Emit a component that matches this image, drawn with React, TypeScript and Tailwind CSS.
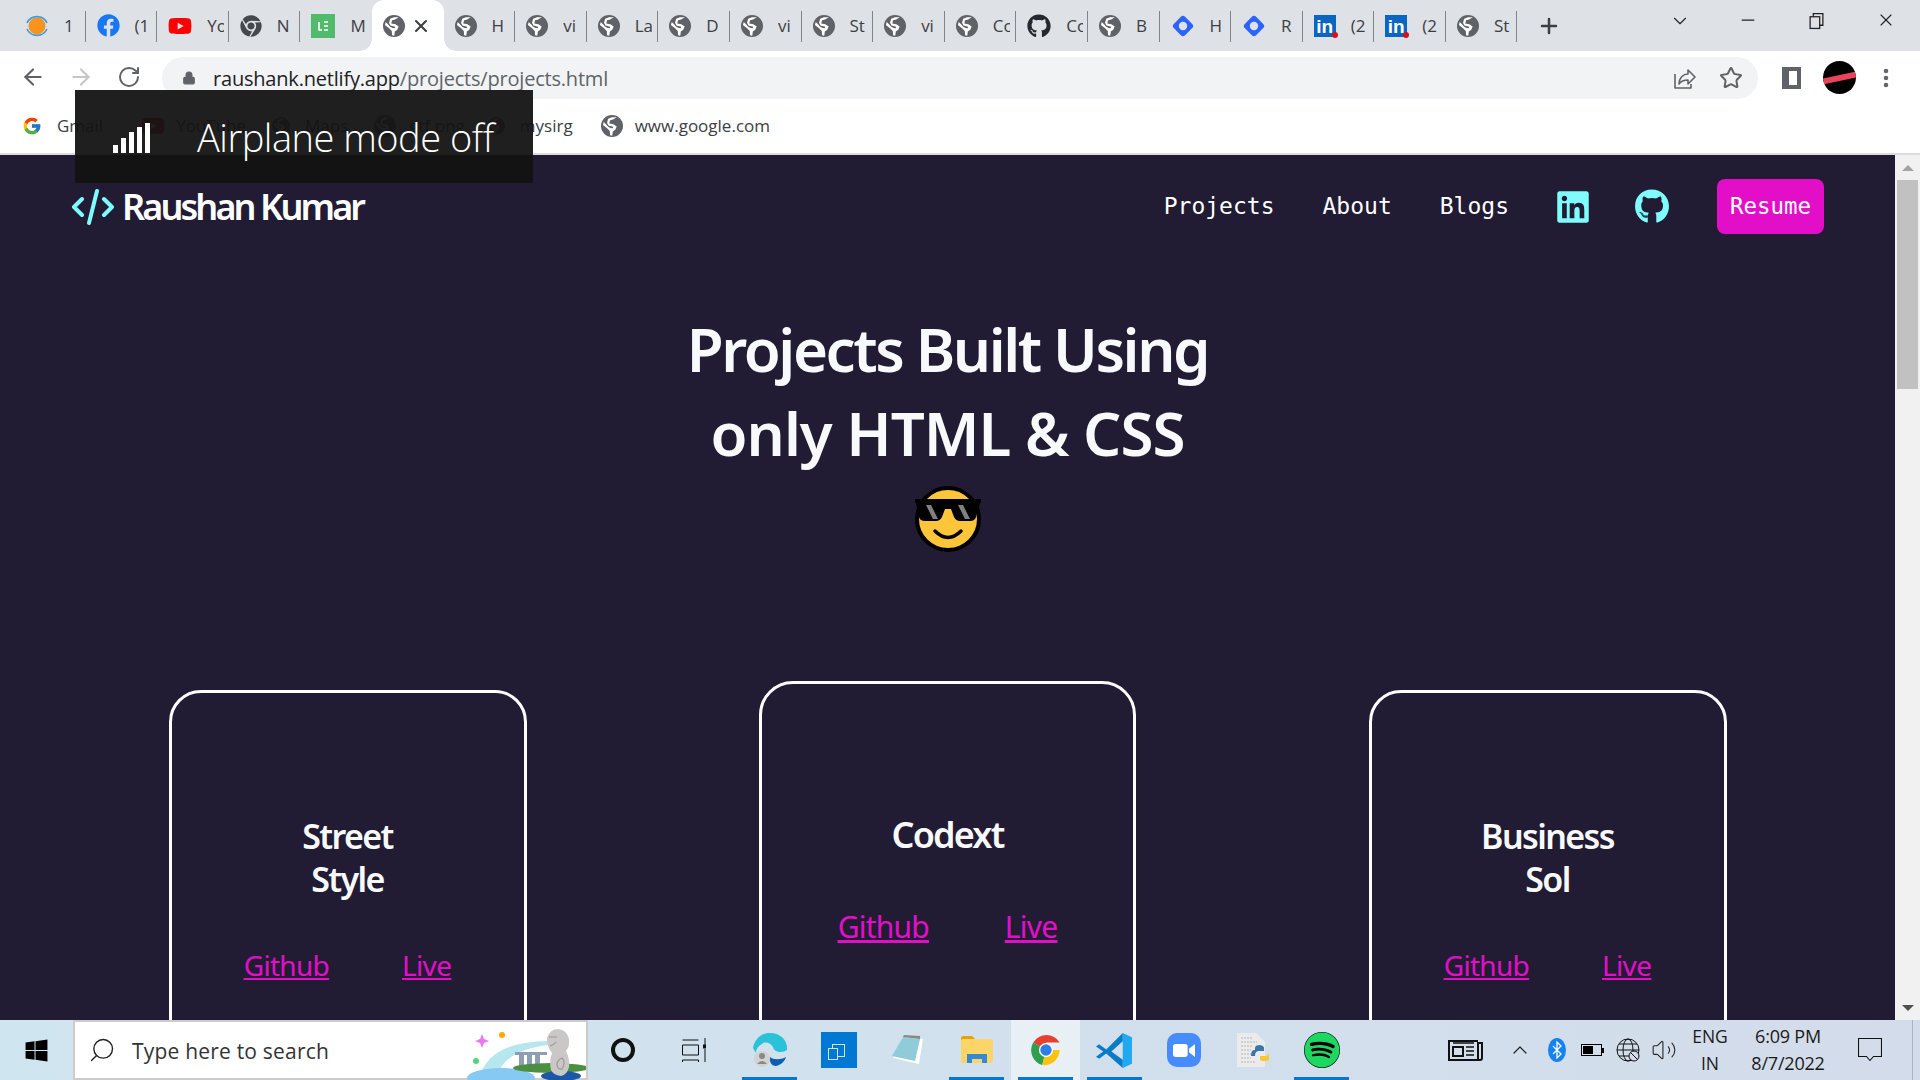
import React from "react";
import { FaFacebook, FaGithub, FaLinkedin, FaYoutube, FaChrome, FaSpotify, FaWindows } from "react-icons/fa";
import { FcGoogle } from "react-icons/fc";
import { ArrowLeft, ArrowRight, RotateCw, Lock, Star, Plus, ChevronDown, Minus, X, MoreVertical, Search, ChevronUp, Volume2 } from "lucide-react";

const Globe = ({ className = "w-[22px] h-[22px]" }: { className?: string }) => (
  <svg viewBox="0 0 16 16" className={`shrink-0 ${className}`}>
    <circle cx="8" cy="8" r="8" fill="#5f6368" />
    <path d="M11.5 1.6 8.8 3.2 6.6 3.8 6 6.2 9 6.8 11.4 8.4 10.4 10.8 8.6 12 8.2 15 6.6 14.8 6.4 11.6 4.4 9.6 1.4 7.2 2 5 4 7 5 8.4 7 9.4 8.6 9.6 8.8 8.6 5.4 7.6 4.4 5.6 5.2 2.8 8 1.6Z" fill="#fff" />
  </svg>
);

const Diamond = () => (
  <svg viewBox="0 0 24 24" className="w-[24px] h-[24px] shrink-0">
    <rect x="4" y="4" width="16" height="16" rx="3" fill="#2b63ff" transform="rotate(45 12 12)" />
    <circle cx="12" cy="12" r="4.2" fill="#dee1e6" />
  </svg>
);

const LinkedinTab = () => (
  <div className="relative w-[22px] h-[22px] shrink-0 bg-[#0a66c2] flex items-end justify-center">
    <span className="text-white font-bold text-[19px] leading-[20px] font-['Liberation_Sans',sans-serif]">in</span>
    <span className="absolute -right-[2px] -bottom-[1px] w-[6px] h-[6px] rounded-full bg-[#d8101c]" />
  </div>
);

const OrangeIcon = () => (
  <svg viewBox="0 0 24 24" className="w-[24px] h-[24px] shrink-0">
    <circle cx="12" cy="12" r="8.5" fill="#f7931e" />
    <path d="M2 9a11 11 0 0 1 20 0M2 15a11 11 0 0 0 20 0" fill="none" stroke="#3b9ad9" strokeWidth="1.6" />
  </svg>
);

const ElementorIcon = () => (
  <svg viewBox="0 0 24 24" className="w-[24px] h-[24px] shrink-0">
    <rect width="24" height="24" fill="#52bb6b" />
    <path d="M8 8v8h3M13 8h4M13 12h4M13 16h4" fill="none" stroke="#fff" strokeWidth="1.6" />
  </svg>
);

const tabs: { icon: React.ReactNode; title: string }[] = [
  { icon: <OrangeIcon />, title: "1" },
  { icon: <FaFacebook className="w-[23px] h-[23px] shrink-0 text-[#1877f2]" />, title: "(1" },
  { icon: <FaYoutube className="w-[24px] h-[24px] shrink-0 text-[#f00]" />, title: "Yo" },
  { icon: <FaChrome className="w-[22px] h-[22px] shrink-0 text-[#45484c]" />, title: "N" },
  { icon: <ElementorIcon />, title: "M" },
  { icon: <Globe />, title: "" },
  { icon: <Globe />, title: "H" },
  { icon: <Globe />, title: "vi" },
  { icon: <Globe />, title: "La" },
  { icon: <Globe />, title: "D" },
  { icon: <Globe />, title: "vi" },
  { icon: <Globe />, title: "St" },
  { icon: <Globe />, title: "vi" },
  { icon: <Globe />, title: "Co" },
  { icon: <FaGithub className="w-[24px] h-[24px] shrink-0 text-[#24292f]" />, title: "Co" },
  { icon: <Globe />, title: "B" },
  { icon: <Diamond />, title: "H" },
  { icon: <Diamond />, title: "R" },
  { icon: <LinkedinTab />, title: "(2" },
  { icon: <LinkedinTab />, title: "(2" },
  { icon: <Globe />, title: "St" },
];

const TabStrip = () => (
  <div className="h-[51px] shrink-0 bg-[#dee1e6] flex items-stretch pl-[14px]">
    {tabs.map((tab, i) => {
      const active = i === 5;
      const hideLine = i === 4 || i === 5;
      return (
        <div
          key={i}
          className={`relative w-[71.6px] shrink-0 flex items-center pl-[11px] ${active ? "bg-white rounded-t-[12px]" : ""}`}
        >
          {tab.icon}
          {active ? (
            <X className="w-[20px] h-[20px] ml-[6px] text-[#3c4043]" strokeWidth={2.5} />
          ) : (
            <span className="ml-[15px] w-[17px] overflow-hidden whitespace-nowrap text-[17px] text-[#3c4043] font-['Open_Sans',sans-serif]">
              {tab.title}
            </span>
          )}
          {!hideLine && <span className="absolute right-0 top-[11px] h-[31px] w-[1px] bg-[#80868b]" />}
          {active && (
            <>
              <span className="absolute -left-[12px] bottom-0 w-[12px] h-[12px] bg-[radial-gradient(circle_at_0_0,#dee1e6_11.5px,#fff_12px)]" />
              <span className="absolute -right-[12px] bottom-0 w-[12px] h-[12px] bg-[radial-gradient(circle_at_100%_0,#dee1e6_11.5px,#fff_12px)]" />
            </>
          )}
        </div>
      );
    })}
    <Plus className="w-[24px] h-[24px] self-center ml-[20px] text-[#3c4043]" strokeWidth={2.5} />
    <div className="ml-auto flex items-start pt-[10px] text-[#222]">
      <ChevronDown className="w-[22px] h-[22px] mr-[47px]" strokeWidth={1.2} />
      <Minus className="w-[20px] h-[20px] mr-[50px]" strokeWidth={1.5} />
      <svg viewBox="0 0 16 16" className="w-[17px] h-[22px] mr-[51px]" fill="none" stroke="#222" strokeWidth="1.2">
        <rect x="2" y="4" width="9" height="11" />
        <path d="M5 4V1h9v11h-3" />
      </svg>
      <X className="w-[20px] h-[20px] mr-[24px]" strokeWidth={1.3} />
    </div>
  </div>
);

const Toolbar = () => (
  <div className="h-[51px] shrink-0 bg-white flex items-center text-[#5f6368]">
    <ArrowLeft className="w-[26px] h-[26px] ml-[20px]" strokeWidth={2} />
    <ArrowRight className="w-[26px] h-[26px] ml-[22px] text-[#c4c6c9]" strokeWidth={2} />
    <RotateCw className="w-[24px] h-[24px] ml-[23px]" strokeWidth={2} />
    <div className="ml-[21px] w-[1596px] h-[42px] mt-[3px] rounded-full bg-[#f1f3f4] flex items-center pl-[20px] pr-[15px]">
      <Lock className="w-[14px] h-[16px] fill-[#5f6368]" strokeWidth={2} />
      <span className="ml-[17px] mt-[1px] text-[20px] tracking-[-0.2px] font-['Open_Sans',sans-serif] text-[#5f6368]">
        <span className="text-[#202124]">raushank.netlify.app</span>/projects/projects.html
      </span>
      <svg viewBox="0 0 24 24" className="ml-auto w-[24px] h-[24px]" fill="none" stroke="#5f6368" strokeWidth="1.6" strokeLinejoin="round">
        <path d="M3 8v14h16v-4" />
        <path d="M7 18c0-6 4-10 9-10V4l7 7-7 7v-4c-4 0-7 1-9 4Z" />
      </svg>
      <Star className="ml-[23px] w-[24px] h-[24px]" strokeWidth={2} />
    </div>
    <div className="ml-[24px] mt-[2px] w-[19px] h-[22px] border-[4px] border-l-[7px] border-[#5f6368]" />
    <div className="ml-[22px] mt-[2px] w-[33px] h-[33px] rounded-full bg-black flex items-center overflow-hidden">
      <div className="w-full h-[6px] bg-[#e8455a] -rotate-12" />
    </div>
    <MoreVertical className="ml-[18px] mt-[2px] w-[24px] h-[24px]" strokeWidth={2.5} />
  </div>
);

const bookmarks = [
  { icon: <FcGoogle className="w-[20px] h-[20px]" />, label: "Gmail", ml: "ml-[22px]", gap: "ml-[15px]" },
  { icon: <FaYoutube className="w-[24px] h-[24px] text-[#f00]" />, label: "YouTube", ml: "ml-[38px]", gap: "ml-[11px]" },
  { icon: <Globe className="w-[18px] h-[20px]" />, label: "Maps", ml: "ml-[26px]", gap: "ml-[15px]" },
  { icon: <Globe />, label: "gtf.png", ml: "ml-[26px]", gap: "ml-[13px]" },
  { icon: <Globe className="w-[18px] h-[20px]" />, label: "mysirg", ml: "ml-[22px]", gap: "ml-[15px]" },
  { icon: <Globe />, label: "www.google.com", ml: "ml-[28px]", gap: "ml-[12px]" },
];

const BookmarkBar = () => (
  <div className="h-[53px] shrink-0 bg-white border-b-2 border-[#dadce0] flex items-center pb-[4px] text-[#3c4043] text-[17px] font-['Open_Sans',sans-serif]">
    {bookmarks.map((b) => (
      <React.Fragment key={b.label}>
        <span className={b.ml}>{b.icon}</span>
        <span className={b.gap}>{b.label}</span>
      </React.Fragment>
    ))}
  </div>
);

const AirplaneToast = () => (
  <div className="absolute left-[75px] top-[90px] w-[458px] h-[93px] bg-[#131313]/95 flex items-center z-10">
    <svg viewBox="0 0 37 30" className="ml-[38px] w-[37px] h-[30px] mt-[2px]" fill="#fff">
      <rect x="0" y="22" width="5" height="8" />
      <rect x="8" y="15" width="5" height="15" />
      <rect x="16" y="9" width="5" height="21" />
      <rect x="24" y="4" width="5" height="26" />
      <rect x="32" y="0" width="5" height="30" />
    </svg>
    <span className="ml-[47px] mt-[2px] text-white font-light text-[38px] tracking-[-0.5px] font-['Open_Sans',sans-serif]">
      Airplane mode off
    </span>
  </div>
);

const Emoji = () => (
  <svg viewBox="0 0 68 68" className="w-[68px] h-[68px]">
    <circle cx="34" cy="34" r="31" fill="#fdc53a" stroke="#000" strokeWidth="4" />
    <path d="M1 14h66v4h-1l-4 14q-1 4-6 4H46q-4 0-6-4l-3-8h-6l-3 8q-2 4-6 4H11q-5 0-6-4L2 18H1Z" fill="#000" />
    <path d="M12 20l7 14h5L17 20ZM44 20l7 14h5L49 20Z" fill="#808080" />
    <path d="M21 46q13 13 26 0" fill="none" stroke="#000" strokeWidth="3.5" strokeLinecap="round" />
  </svg>
);

const Card = ({ title, big }: { title: string[]; big?: boolean }) => (
  <div
    className={`border-white flex flex-col items-center ${
      big ? "w-[377px] h-[378px] rounded-[34px] border-[3px] pt-[128px]" : "w-[358px] h-[360px] rounded-[32px] border-[3px] pt-[122px]"
    }`}
  >
    <h2
      className={`text-center font-semibold text-[#f8f9fa] ${
        big ? "text-[36px] leading-[45px] tracking-[-1.8px]" : "text-[34px] leading-[43px] tracking-[-1.6px]"
      }`}
    >
      {title.map((t) => (
        <div key={t}>{t}</div>
      ))}
    </h2>
    <div className={`flex text-[#e30fc8] underline ${big ? "mt-[47px] gap-[76px] text-[30px] tracking-[-0.8px]" : "mt-[43px] gap-[73px] text-[28px] tracking-[-0.7px]"}`}>
      <a>Github</a>
      <a>Live</a>
    </div>
  </div>
);

const Page = () => (
  <div className="relative flex-1 min-h-0 flex bg-[#211c33] overflow-hidden font-['Noto_Sans',sans-serif]">
    <div className="flex-1 min-w-0">
      <header className="h-[103px] flex items-center justify-between px-[71px]">
        <div className="flex items-center">
          <svg viewBox="0 0 44 36" className="w-[44px] h-[36px]" fill="none" stroke="#7ffdfd" strokeWidth="4" strokeLinecap="round" strokeLinejoin="round">
            <path d="M11 10 3 18l8 8M33 10l8 8-8 8M26 2 18 34" />
          </svg>
          <span className="ml-[7px] text-white font-semibold text-[36px] tracking-[-2.9px]">Raushan Kumar</span>
        </div>
        <nav className="flex items-center gap-12 text-[23px] text-white font-['DejaVu_Sans_Mono',monospace]">
          <a>Projects</a>
          <a>About</a>
          <a>Blogs</a>
          <FaLinkedin className="w-[32px] h-[36px] text-[#7ffdfd]" />
          <FaGithub className="-ml-[2px] w-[34px] h-[35px] text-[#7ffdfd]" />
          <button className="w-[107px] h-[55px] rounded-lg bg-[#e30fc8] text-[22.4px]">Resume</button>
        </nav>
      </header>
      <h1 className="mt-[50px] text-center text-[#f8f9fa] font-semibold text-[60px] leading-[83.5px]">
        <div className="tracking-[-2.4px]">Projects Built Using</div>
        <div className="tracking-[-1px]">only HTML &amp; CSS</div>
        <div className="h-[86px] pt-[1px] flex items-center justify-center">
          <Emoji />
        </div>
      </h1>
      <section className="mt-[119.5px] grid grid-cols-[600px_600px_600px] justify-center justify-items-center items-center">
        <Card title={["Street", "Style"]} />
        <Card title={["Codext"]} big />
        <Card title={["Business", "Sol"]} />
      </section>
    </div>
    <div className="w-[25px] shrink-0 bg-[#f1f1f1] flex flex-col items-center">
      <div className="h-[25px] flex items-center justify-center">
        <div className="w-0 h-0 border-x-[6px] border-x-transparent border-b-[6px] border-b-[#a3a3a3]" />
      </div>
      <div className="w-[21px] h-[209px] bg-[#c1c1c1]" />
      <div className="mt-auto h-[25px] flex items-center justify-center">
        <div className="w-0 h-0 border-x-[6px] border-x-transparent border-t-[6px] border-t-[#505050]" />
      </div>
    </div>
  </div>
);

const SearchArt = () => (
  <svg viewBox="0 0 127 60" className="absolute right-0 top-0 w-[127px] h-[60px]">
    <path d="M23 12l2 5 5 2-5 2-2 5-2-5-5-2 5-2Z" fill="#e879f0" />
    <circle cx="43" cy="13" r="3" fill="#fdaa00" />
    <circle cx="17" cy="39" r="3" fill="#4fd67a" />
    <path d="M20 56C28 30 50 20 90 19v4C62 26 42 36 38 56Z" fill="#b6e6ee" />
    <path d="M56 30h32v3H56ZM60 33h5v14h-5ZM68 33h5v14h-5ZM76 33h5v14h-5Z" fill="#8f9fb3" />
    <ellipse cx="42" cy="56" rx="34" ry="10" fill="#86c9f2" />
    <ellipse cx="92" cy="46" rx="38" ry="5" fill="#4c8f43" />
    <ellipse cx="102" cy="54" rx="20" ry="5" fill="#1b56a8" />
    <path d="M88 16q3-9 11-9 9 1 11 10 1 7-3 12 4 8 3 16-2 8-8 9-8-1-10-6-2-9 1-17-5-6-5-15Z" fill="#c9c8c6" />
    <path d="M90 15h8M91 24q4-1 6-4M103 36q4 4 0 11-4 1-5-4 0-5 5-7Z" fill="none" stroke="#9b9a98" strokeWidth="1.2" />
  </svg>
);

const Edge = () => (
  <svg viewBox="0 0 36 36" className="w-[36px] h-[36px]">
    <path d="M1 16C3 6 10 1 18 1c10 0 18 7 17 17-4 3-13 3-14-3-2-4-8-6-11-3-4 2-6 5-6 9Z" fill="#2ac2d8" />
    <path d="M24 34c5-1 9-5 10-9-5 3-13 3-16 0-1 4 1 9 6 9Z" fill="#0f5fb0" />
    <circle cx="10" cy="27" r="8" fill="#d2d2d2" />
    <circle cx="10" cy="24" r="3" fill="#888" />
    <path d="M5 32q5-6 10 0Z" fill="#888" />
  </svg>
);

const ChromeColor = () => (
  <svg viewBox="0 0 36 36" className="w-[34px] h-[34px]">
    <path d="M18 18 4.5 10A16.5 16.5 0 0 1 32.5 10H18Z" fill="#e8402f" />
    <path d="M18 18 4.5 10A16.5 16.5 0 0 0 14 34Z" fill="#2f9e4f" />
    <path d="M18 18H32.5A16.5 16.5 0 0 1 14 34Z" fill="#fdc30e" />
    <circle cx="18" cy="18" r="7.5" fill="#fff" />
    <circle cx="18" cy="18" r="6" fill="#2f7de8" />
  </svg>
);

const VSCode = () => (
  <svg viewBox="0 0 36 36" className="w-[37px] h-[37px]">
    <path d="M26 1 35 5v26l-9 4Z" fill="#1fa9f2" />
    <path d="M26 1 10 17 3 12 0 14l7 5-7 5 3 2 7-5 16 14v-8L15 19 26 9Z" fill="#0a7cc7" />
  </svg>
);

const Zoom = () => (
  <div className="w-[34px] h-[34px] rounded-[10px] bg-[#468cff] flex items-center justify-center">
    <svg viewBox="0 0 24 16" className="w-[22px] h-[15px]" fill="#fff">
      <rect x="0" y="1" width="16" height="14" rx="3" />
      <path d="M17.5 6 24 1v14l-6.500-5Z" />
    </svg>
  </div>
);

const Folder = () => (
  <svg viewBox="0 0 32 28" className="w-[32px] h-[28px]">
    <path d="M0 2q0-2 2-2h9l4 4H0Z" fill="#e3a408" />
    <rect x="0" y="3" width="32" height="24" rx="2" fill="#fcd569" />
    <path d="M6 27v-9h20v9h-5v-4H11v4Z" fill="#3488d4" />
  </svg>
);

const Notepad = () => (
  <svg viewBox="0 0 34 32" className="w-[34px] h-[32px]">
    <path d="M12 3 32 5 28 30 2 24Z" fill="#ffffff" />
    <path d="M12 3 29 5 24 27 1 22Z" fill="#8fcbd8" />
    <path d="M12 3 29 5 29 2 13 1Z" fill="#888" />
  </svg>
);

const PyFile = () => (
  <svg viewBox="0 0 34 36" className="w-[34px] h-[36px]">
    <path d="M1 1h19l9 9v25H1Z" fill="#ebebeb" />
    <path d="M5 6h12M5 10h16M5 14h12M5 18h10M5 22h10M5 26h10M5 30h14" stroke="#b5b5b5" strokeWidth="1.2" strokeDasharray="2 1" />
    <path d="M16 20q0-5 4-5h5v-3q0-2-4-3-5 0-5 3v2h-1q-3 0-3 6 0 0 4 0Z" transform="translate(3 4)" fill="#3a76a8" />
    <path d="M33 19q0 5-4 5h-5v3q0 2 4 2 5 0 5-2Z" fill="#fbc72e" />
  </svg>
);

type TaskItem = { node: React.ReactNode; open?: boolean; active?: boolean };

const taskItems: TaskItem[] = [
  { node: <Edge />, open: true },
  {
    node: (
      <div className="w-[36px] h-[36px] bg-[#0078d4] flex items-center justify-center">
        <div className="relative w-[13px] h-[13px] border border-white/80">
          <div className="absolute -left-[5px] top-[3px] w-[10px] h-[12px] border border-white/80 bg-[#0078d4]" />
        </div>
      </div>
    ),
  },
  { node: <Notepad /> },
  { node: <Folder />, open: true },
  { node: <ChromeColor />, open: true, active: true },
  { node: <VSCode />, open: true },
  { node: <Zoom /> },
  { node: <PyFile /> },
  {
    node: (
      <div className="w-[36px] h-[36px] rounded-full bg-black">
        <FaSpotify className="w-[36px] h-[36px] text-[#1ed760]" />
      </div>
    ),
    open: true,
  },
];

const Taskbar = () => (
  <div className="h-[60px] shrink-0 flex items-stretch bg-gradient-to-r from-[#cfe5ef] to-[#d3dcea] text-[#1a1a1a] font-['Open_Sans',sans-serif]">
    <div className="w-[73px] flex items-center justify-center">
      <FaWindows className="w-[25px] h-[25px] text-black" />
    </div>
    <div className="relative w-[515px] bg-white border-2 border-[#cccccc] flex items-center pl-[13px]">
      <Search className="w-[28px] h-[28px] -scale-x-100 text-[#222]" strokeWidth={1.2} />
      <span className="ml-[16px] mt-[3px] text-[21px] tracking-[0.2px] text-[#333]">Type here to search</span>
      <SearchArt />
    </div>
    <div className="w-[70px] flex items-center justify-center">
      <div className="w-[24px] h-[24px] rounded-full border-[4px] border-[#111]" />
    </div>
    <div className="w-[72px] flex items-center justify-center">
      <svg viewBox="0 0 24 24" className="w-[24px] h-[24px]" fill="none" stroke="#111" strokeWidth="1">
        <path d="M0.500 2h16M0.500 7h16v10h-16ZM0.500 22h16M0.500 24v-2M16.500 24v-2M23 0v7M23 11v13" />
        <rect x="21.500" y="7" width="3" height="3" fill="#111" />
      </svg>
    </div>
    <div className="ml-[5px] flex items-stretch">
      {taskItems.map((item, i) => (
        <div
          key={i}
          className={`relative w-[69px] flex items-center justify-center ${item.active ? "bg-white/50" : ""}`}
        >
          {item.node}
          {item.open && <span className="absolute left-[7px] right-[7px] bottom-0 h-[3px] bg-[#0078d4]" />}
        </div>
      ))}
    </div>
    <div className="ml-auto flex items-center relative">
      <svg viewBox="0 0 36 24" className="w-[36px] h-[24px]" fill="none" stroke="#111" strokeWidth="2">
        <path d="M31 3H2v19h31a2 2 0 0 0 2-2V5h-4v17" />
        <rect x="6" y="9" width="10" height="9" />
        <path d="M6 5h21M19 9h8M19 13h8M19 17h8" strokeWidth="1.5" />
      </svg>
      <ChevronUp className="ml-[25px] w-[24px] h-[24px] text-[#222]" strokeWidth={1.2} />
      <svg viewBox="0 0 18 24" className="ml-[16px] w-[18px] h-[24px]">
        <ellipse cx="9" cy="12" rx="9" ry="12" fill="#1583ef" />
        <path d="M5 8l8 8-4 4V4l4 4-8 8" fill="none" stroke="#fff" strokeWidth="1.3" />
      </svg>
      <div className="ml-[15px] flex items-center">
        <div className="w-[21px] h-[12px] border border-black p-[1px]">
          <div className="w-[10px] h-full bg-black" />
        </div>
        <div className="w-[2px] h-[5px] bg-black" />
      </div>
      <svg viewBox="0 0 24 24" className="ml-[12px] w-[24px] h-[24px]" fill="none" stroke="#111" strokeWidth="1">
        <circle cx="12" cy="12" r="11" />
        <ellipse cx="12" cy="12" rx="5" ry="11" />
        <path d="M1 12h22M3 6h18M3 18h18" />
        <circle cx="18" cy="18" r="5" fill="#d3dcea" />
        <path d="M14.500 14.500l7 7" />
      </svg>
      <Volume2 className="ml-[11px] w-[26px] h-[26px] text-[#222]" strokeWidth={1} />
      <div className="ml-[8px] w-[50px] text-center text-[17.5px] leading-[27px]">
        <div>ENG</div>
        <div>IN</div>
      </div>
      <div className="ml-[8px] w-[90px] text-center text-[18px] leading-[27px] tracking-[-0.2px]">
        <div>6:09 PM</div>
        <div>8/7/2022</div>
      </div>
      <svg viewBox="0 0 24 24" className="ml-[25px] mr-[38px] w-[24px] h-[24px]" fill="none" stroke="#111" strokeWidth="1.1">
        <path d="M0.500 0.500h23v18h-8l-3.500 4-3.500-4h-8Z" />
      </svg>
      <span className="absolute right-[7px] top-0 bottom-0 w-[1px] bg-[#aab3c0]" />
    </div>
  </div>
);

export default function App() {
  return (
    <div className="relative w-[1920px] h-[1080px] overflow-hidden flex flex-col bg-white">
      <TabStrip />
      <Toolbar />
      <BookmarkBar />
      <AirplaneToast />
      <Page />
      <Taskbar />
    </div>
  );
}
